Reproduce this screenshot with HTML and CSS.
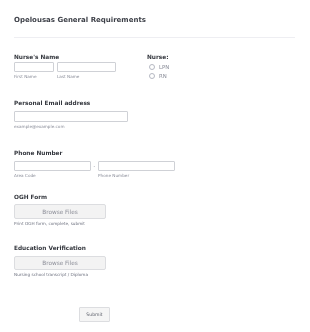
FILE: index.html
```html
<!DOCTYPE html>
<html lang="en">
<head>
  <meta charset="UTF-8" />
  <meta name="viewport" content="width=device-width, initial-scale=1.0" />
  <title>Opelousas General Requirements</title>
  <link rel="stylesheet" href="styles.css">
</head>
<body>
  <form class="form">
    <h1 class="title">Opelousas General Requirements</h1>
    <hr class="divider">

    <div class="row">
      <div class="field name-field">
        <label class="label">Nurse's Name</label>
        <div class="inputs">
          <div class="sub">
            <input class="input first" type="text">
            <span class="sublabel">First Name</span>
          </div>
          <div class="sub">
            <input class="input last" type="text">
            <span class="sublabel">Last Name</span>
          </div>
        </div>
      </div>
      <div class="field nurse-field">
        <label class="label">Nurse:</label>
        <div class="radio"><span class="circle"></span>LPN</div>
        <div class="radio"><span class="circle"></span>RN</div>
      </div>
    </div>

    <div class="field email-field">
      <label class="label">Personal Email address</label>
      <input class="input email" type="text">
      <span class="sublabel">example@example.com</span>
    </div>

    <div class="field phone-field">
      <label class="label">Phone Number</label>
      <div class="inputs">
        <div class="sub">
          <input class="input phone" type="text">
          <span class="sublabel">Area Code</span>
        </div>
        <span class="dash">-</span>
        <div class="sub">
          <input class="input phone" type="text">
          <span class="sublabel">Phone Number</span>
        </div>
      </div>
    </div>

    <div class="field ogh-field">
      <label class="label">OGH Form</label>
      <button class="browse" type="button">Browse Files</button>
      <span class="sublabel dark">Print OGH form, complete, submit</span>
    </div>

    <div class="field edu-field">
      <label class="label">Education Verification</label>
      <button class="browse" type="button">Browse Files</button>
      <span class="sublabel dark">Nursing school transcript / Diploma</span>
    </div>

    <div class="actions">
      <button class="submit" type="button">Submit</button>
    </div>
  </form>
</body>
</html>
```

FILE: styles.css
```css
body {
  margin: 0;
  background: #fff;
  font-family: "DejaVu Sans", Verdana, sans-serif;
  color: #2c3345;
}

.form {
  padding: 15px 15px 0 14px;
  background: #fff;
  will-change: transform;
}

.title {
  margin: 0;
  font-size: 7px;
  line-height: 10px;
  font-weight: bold;
  color: #3c3f47;
}

.divider {
  margin: 12px 0 0;
  border: 0;
  border-top: 1px solid #eeeef2;
}

.row {
  display: flex;
  margin-top: 15px;
}

.name-field {
  width: 133px;
}

.label {
  display: block;
  font-size: 5.8px;
  line-height: 8px;
  font-weight: bold;
  color: #33363d;
}

.inputs {
  display: flex;
  gap: 3px;
}

.sub {
  display: flex;
  flex-direction: column;
}

.input {
  display: block;
  box-sizing: border-box;
  margin: 1px 0 0;
  padding: 0;
  height: 10px;
  border: 1px solid #cfd1d6;
  border-radius: 1px;
  background: #fff;
}

.first { width: 40px; }
.last { width: 59px; }

.sublabel {
  display: block;
  margin-top: 2px;
  font-size: 4.2px;
  line-height: 6px;
  color: #8a8d99;
}

.sublabel.dark {
  color: #6f7380;
}

.nurse-field .radio {
  display: flex;
  align-items: center;
  height: 9px;
  font-size: 5.4px;
  color: #8a8d99;
}

.nurse-field .label {
  margin-bottom: 1px;
}

.circle {
  box-sizing: border-box;
  width: 6px;
  height: 6px;
  margin: 0 4px 0 2px;
  border: 1px solid #b5b8c2;
  border-radius: 50%;
}

.email-field {
  margin-top: 19px;
}

.email-field .input {
  width: 114px;
  height: 11px;
  margin-top: 4px;
}

.phone-field {
  margin-top: 19px;
}

.phone-field .input {
  margin-top: 4px;
}

.phone {
  width: 77px;
}

.phone-field .inputs {
  gap: 0;
}

.dash {
  width: 7px;
  margin-top: 4px;
  font-size: 5px;
  line-height: 10px;
  text-align: center;
  color: #8a8d99;
}

.ogh-field {
  margin-top: 14px;
}

.edu-field {
  margin-top: 17px;
}

.browse {
  display: block;
  box-sizing: border-box;
  width: 92px;
  height: 15px;
  margin-top: 3px;
  padding: 0;
  border: 1px solid #dcdde0;
  border-radius: 2px;
  background: #f3f3f3;
  font-family: "DejaVu Sans", Verdana, sans-serif;
  font-size: 5.8px;
  color: #8d8f99;
}

.edu-field .browse {
  margin-top: 4px;
  height: 14px;
}

.actions {
  padding: 23px 0 20px 65px;
}

.submit {
  box-sizing: border-box;
  width: 31px;
  height: 15px;
  padding: 0;
  border: 1px solid #dcdde0;
  border-radius: 1px;
  background: #f5f5f5;
  font-family: "DejaVu Sans", Verdana, sans-serif;
  font-size: 4.6px;
  color: #5d606b;
}
```
